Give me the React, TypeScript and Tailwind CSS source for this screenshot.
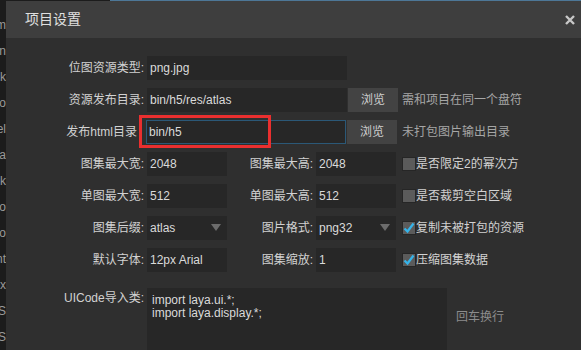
import React from "react";

const sideWords = ["Item", "Button", "Check", "Radio", "Label", "TextArea", "Clock", "Combo", "Radio", "Font", "Box", "ListS", "TabS"];

function Label({ text, w }: { text: string; w: string }) {
  return <span className={`${w} shrink-0 text-right pr-[3px] text-[12px] text-[#d2d2d2]`}>{text}</span>;
}

function Field({ value, w }: { value: string; w: string }) {
  return (
    <div className={`${w} h-[24px] shrink-0 bg-[#272727] flex items-center pl-[3px] text-[12px] text-[#dadada]`}>
      {value}
    </div>
  );
}

function Select({ value }: { value: string }) {
  return (
    <div className="w-[80px] h-[24px] shrink-0 bg-[#272727] flex items-center justify-between pl-[3px] pr-[6px] text-[12px] text-[#dadada]">
      <span>{value}</span>
      <svg width="10" height="8" viewBox="0 0 10 8">
        <path d="M0 0 L10 0 L5 7 Z" fill="#6c6c6c" />
      </svg>
    </div>
  );
}

function Check({ text, checked }: { text: string; checked?: boolean }) {
  return (
    <div className="flex items-center ml-[6px] text-[12px] text-[#d2d2d2]">
      <div className="w-[14px] h-[14px] bg-[#5b5b5b] border border-[#262626] flex items-center justify-center">
        {checked && (
          <svg width="12" height="12" viewBox="0 0 12 12">
            <path d="M1.5 6.5 L4.5 9.5 L10.5 1.5" fill="none" stroke="#35b4ea" strokeWidth="2.2" />
          </svg>
        )}
      </div>
      <span>{text}</span>
    </div>
  );
}

function Browse() {
  return (
    <div className="w-[50px] h-[24px] ml-[1px] shrink-0 bg-[#434343] flex items-center justify-center text-[12px] text-[#cfcfcf]">
      浏览
    </div>
  );
}

export default function App() {
  return (
    <div className="w-[581px] h-[350px] flex bg-[#1c1c1c] overflow-hidden relative font-['Liberation_Sans','Noto_Sans_CJK_SC',sans-serif]">
      <div className="absolute top-0 left-[110px] right-0 h-px bg-[#4d7797]" />
      <div className="w-[6px] shrink-0 overflow-hidden flex flex-col items-end pt-[12px] text-[12px] leading-[26px] text-[#9a9a9a]">
        {sideWords.map((w, i) => (
          <span key={i} className="whitespace-nowrap">{w}</span>
        ))}
      </div>
      <div className="flex-1 mt-px flex flex-col bg-[#2f2f2f]">
        <div className="h-[37px] shrink-0 bg-[#3e3e3e] flex items-center justify-between pl-[19px] pr-[6px]">
          <span className="text-[14px] text-[#e0e0e0]">项目设置</span>
          <svg width="10" height="10" viewBox="0 0 10 10">
            <path d="M1 1 L9 9 M9 1 L1 9" stroke="#c8c8c8" strokeWidth="2.4" />
          </svg>
        </div>
        <div className="flex flex-col gap-[8px] pt-[18px]">
          <div className="flex items-center h-[24px]">
            <Label text="位图资源类型:" w="w-[141px]" />
            <Field value="png.jpg" w="w-[200px]" />
          </div>
          <div className="flex items-center h-[24px]">
            <Label text="资源发布目录:" w="w-[141px]" />
            <Field value="bin/h5/res/atlas" w="w-[200px]" />
            <Browse />
            <span className="ml-[4px] text-[12px] text-[#a6a6a6]">需和项目在同一个盘符</span>
          </div>
          <div className="flex items-center h-[24px] relative">
            <span className="w-[131px] shrink-0 text-right text-[12px] text-[#d2d2d2]">发布html目录</span>
            <div className="ml-[9px] w-[200px] h-[24px] shrink-0 bg-[#272727] border border-[#2b5877] flex items-center pl-[2px] text-[12px] text-[#dadada]">
              bin/h5
            </div>
            <Browse />
            <span className="ml-[5px] text-[12px] text-[#a6a6a6]">未打包图片输出目录</span>
            <div className="absolute left-[133px] top-[-5px] w-[132px] h-[33px] border-[3px] border-[#ea2f2f]" />
          </div>
          <div className="flex items-center h-[24px]">
            <Label text="图集最大宽:" w="w-[141px]" />
            <Field value="2048" w="w-[80px]" />
            <Label text="图集最大高:" w="w-[89px]" />
            <Field value="2048" w="w-[80px]" />
            <Check text="是否限定2的幂次方" />
          </div>
          <div className="flex items-center h-[24px]">
            <Label text="单图最大宽:" w="w-[141px]" />
            <Field value="512" w="w-[80px]" />
            <Label text="单图最大高:" w="w-[89px]" />
            <Field value="512" w="w-[80px]" />
            <Check text="是否裁剪空白区域" />
          </div>
          <div className="flex items-center h-[24px]">
            <Label text="图集后缀:" w="w-[141px]" />
            <Select value="atlas" />
            <Label text="图片格式:" w="w-[89px]" />
            <Select value="png32" />
            <Check text="复制未被打包的资源" checked />
          </div>
          <div className="flex items-center h-[24px]">
            <Label text="默认字体:" w="w-[141px]" />
            <Field value="12px Arial" w="w-[80px]" />
            <Label text="图集缩放:" w="w-[89px]" />
            <Field value="1" w="w-[80px]" />
            <Check text="压缩图集数据" checked />
          </div>
        </div>
        <div className="ml-[31px] w-[496px] h-[2px] mt-[7px] bg-[#4a4a4a]" />
        <div className="flex items-start mt-[9px]">
          <span className="w-[141px] shrink-0 text-right pr-[3px] pt-[1px] text-[12px] text-[#d2d2d2]">UICode导入类:</span>
          <div className="w-[300px] h-[70px] shrink-0 bg-[#272727] pl-[5px] pt-[6px] text-[12px] leading-[13px] text-[#dadada]">
            <div>import laya.ui.*;</div>
            <div>import laya.display.*;</div>
          </div>
          <span className="ml-[9px] mt-[20px] text-[12px] text-[#8c8c8c]">回车换行</span>
        </div>
      </div>
    </div>
  );
}
